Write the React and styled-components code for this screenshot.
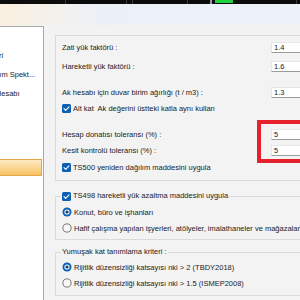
import React from 'react'
import styled, { createGlobalStyle } from 'styled-components'

const GlobalStyle = createGlobalStyle`
  html, body {
    margin: 0;
    padding: 0;
    background: #f3f3f3;
    overflow: hidden;
  }
`

const treeItems = [
  { text: 'Genel Bilgileri', indent: 2 },
  { text: 'Tasarım Spekt...', indent: 26 },
  { text: 'Ak Hesabı', indent: 30 },
]

const CheckIcon = () => (
  <svg width="9" height="9" viewBox="0 0 9 9">
    <rect x="0" y="0" width="9" height="9" rx="1.6" fill="#0b5fb5" />
    <path d="M2 4.7 L3.7 6.3 L7 2.8" fill="none" stroke="#fff" strokeWidth="1.1" strokeLinecap="round" strokeLinejoin="round" />
  </svg>
)

const RadioIcon = ({ on }) => (
  <svg width="10" height="10" viewBox="0 0 10 10">
    {on ? (
      <>
        <circle cx="5" cy="5" r="4.5" fill="#0b5fb5" />
        <circle cx="5" cy="5" r="2.6" fill="#fff" />
        <circle cx="5" cy="5" r="1.6" fill="#0b3f7a" />
      </>
    ) : (
      <circle cx="5" cy="5" r="4.1" fill="#f7f7f7" stroke="#5a5a5a" strokeWidth="0.8" />
    )}
  </svg>
)

const Frame = styled.div`
  width: 300px;
  height: 300px;
  overflow: hidden;
  display: flex;
  flex-direction: column;
  font-family: "Liberation Sans", Arial, sans-serif;
  font-size: 7.5px;
  color: #1b1b1b;
  background: #f3f3f3;
`

const TopStrip = styled.svg`
  display: block;
  flex: none;
`

const Ribbon = styled.div`
  height: 21px;
  flex: none;
  background: linear-gradient(90deg, #fbefdf 0%, #f3f1ec 18%, #ecf1f8 34%, #edf1f8 100%);
`

const Body = styled.div`
  flex: 1;
  display: flex;
  min-height: 0;
`

const Tree = styled.div`
  width: 43px;
  flex: none;
  margin-top: 1px;
  background: #fff;
  border-top: 1px solid #a9a9a9;
  border-right: 1px solid #a9a9a9;
  overflow: hidden;
  padding-top: 19px;
`

const TreeList = styled.div`
  margin-left: -45px;
`

const TreeRow = styled.div`
  height: 19px;
  line-height: 19px;
  white-space: nowrap;
  padding-left: ${p => p.$indent}px;
`

const SelectedRow = styled.div`
  height: 15px;
  margin: 56px 1px 0 0;
  background: linear-gradient(180deg, #fde9c2 0%, #fbd690 55%, #f6c062 100%);
  border: 1px solid #e3a64c;
  border-left: none;
`

const Content = styled.div`
  padding: 10px 0 0 11px;
  flex: none;
  width: 260px;
`

const Group = styled.div`
  position: relative;
  border: 1px solid #dadada;
  padding: 5px 0 7px 6px;
`

const Row = styled.div`
  display: flex;
  align-items: center;
  height: 12px;
  margin-top: ${p => p.$gap || 0}px;
  white-space: nowrap;
`

const Label = styled.span`
  width: 209px;
  flex: none;
`

const Field = styled.div`
  width: 40px;
  height: 11px;
  flex: none;
  box-sizing: border-box;
  background: #fff;
  border: 1px solid #e6e6e6;
  border-bottom-color: #9c9c9c;
  padding-left: 2px;
  line-height: 9px;
`

const Choice = styled.label`
  display: flex;
  align-items: center;
  gap: 2px;
  svg {
    flex: none;
  }
`

const Callout = styled.div`
  position: absolute;
  left: 201px;
  top: 84px;
  width: 120px;
  height: 43px;
  box-sizing: border-box;
  border: 4px solid #e6212b;
  pointer-events: none;
`

const FieldGroup = styled.fieldset`
  margin: ${p => p.$top}px 0 0 0;
  padding: ${p => p.$pad};
  border: 1px solid #dadada;
  min-width: 0;
`

const Legend = styled.legend`
  padding: 0 1px;
  margin-left: -1px;
  height: 10px;
  line-height: 10px;
  display: flex;
  align-items: center;
  gap: 2px;
  white-space: nowrap;
`

export default function App() {
  return (
    <Frame>
      <GlobalStyle />
      <TopStrip width="300" height="4" viewBox="0 0 300 4">
        <rect width="300" height="4" fill="#0b0b0b" />
        <rect x="65" width="1" height="4" fill="#3a3a3a" />
        <rect x="126" width="1" height="4" fill="#3a3a3a" />
        <rect x="132" width="1" height="4" fill="#3a3a3a" />
        <rect x="187" width="1" height="4" fill="#3a3a3a" />
        <rect x="210" width="2" height="4" fill="#9a9a9a" />
        <rect x="215" width="18" height="3" fill="#1fd23c" />
        <rect x="296" width="1" height="4" fill="#3a3a3a" />
      </TopStrip>
      <Ribbon />
      <Body>
        <Tree>
          <TreeList>
            {treeItems.map(item => (
              <TreeRow key={item.text} $indent={item.indent}>{item.text}</TreeRow>
            ))}
          </TreeList>
          <SelectedRow />
        </Tree>
        <Content>
          <Group>
            <Row>
              <Label>Zati yük faktörü :</Label>
              <Field>1.4</Field>
            </Row>
            <Row $gap={7}>
              <Label>Hareketli yük faktörü :</Label>
              <Field>1.6</Field>
            </Row>
            <Row $gap={14}>
              <Label>Ak hesabı için duvar birim ağırlığı (t / m3) :</Label>
              <Field>1.3</Field>
            </Row>
            <Row $gap={4}>
              <Choice><CheckIcon />Alt kat&nbsp; Ak değerini üstteki katla aynı kullan</Choice>
            </Row>
            <Row $gap={14}>
              <Label>Hesap donatısı toleransı (%) :</Label>
              <Field>5</Field>
            </Row>
            <Row $gap={4}>
              <Label>Kesit kontrolü toleransı (%) :</Label>
              <Field>5</Field>
            </Row>
            <Row $gap={5}>
              <Choice><CheckIcon />TS500 yeniden dağılım maddesini uygula</Choice>
            </Row>
            <Callout />
          </Group>

          <FieldGroup $top={10} $pad="5px 0 5px 6px">
            <Legend><CheckIcon />TS498 hareketli yük azaltma maddesini uygula</Legend>
            <Row>
              <Choice><RadioIcon on />Konut, büro ve işhanları</Choice>
            </Row>
            <Row $gap={4}>
              <Choice><RadioIcon />Hafif çalışma yapılan işyerleri, atölyeler, imalathaneler ve mağazalar</Choice>
            </Row>
          </FieldGroup>

          <FieldGroup $top={7} $pad="4px 0 6px 6px">
            <Legend>Yumuşak kat tanımlama kriteri :</Legend>
            <Row>
              <Choice><RadioIcon on />Rijitlik düzensizliği katsayısı nki &gt; 2 (TBDY2018)</Choice>
            </Row>
            <Row $gap={4}>
              <Choice><RadioIcon />Rijitlik düzensizliği katsayısı nki &gt; 1.5 (ISMEP2008)</Choice>
            </Row>
          </FieldGroup>
        </Content>
      </Body>
    </Frame>
  )
}
